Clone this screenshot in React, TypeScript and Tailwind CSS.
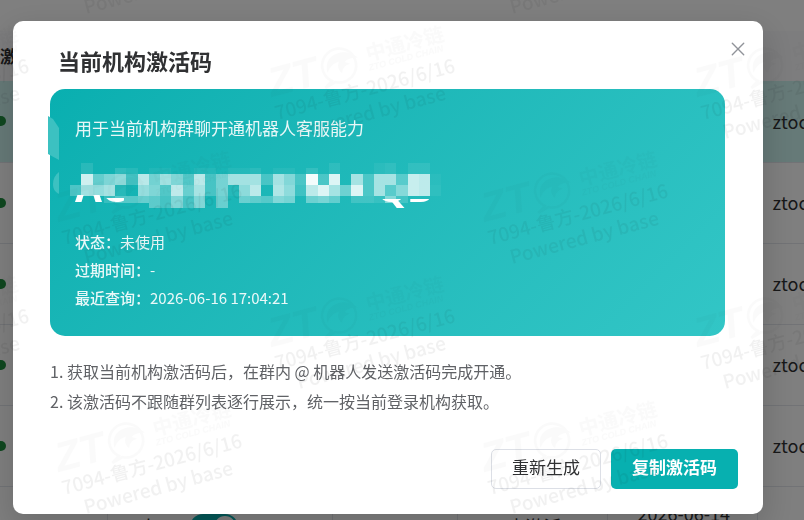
import React, { useState } from 'react';

const CODE_COLS = [70, 81, 93, 104, 115, 126, 138, 149, 160, 171, 183, 194, 205, 216, 228, 239, 250, 261, 273, 284, 295, 306, 318, 329, 340, 351, 363, 374, 385, 396, 408, 419, 430, 441];

// opacity (percent) of every mask block, one list per row
const CODE_ROWS = [
    { y: 163, h: 5, cells: [0, 10, 0, 0, 0, 0, 0, 0, 0, 0, 0, 0, 0, 0, 0, 0, 0, 0, 0, 0, 0, 0, 0, 8, 0, 0, 0, 5, 8, 0, 8, 8] },
    { y: 168, h: 6, cells: [0, 10, 0, 0, 12, 8, 0, 5, 5, 0, 0, 5, 5, 0, 5, 5, 8, 0, 5, 5, 0, 10, 0, 8, 0, 0, 0, 5, 8, 0, 8, 8] },
    { y: 174, h: 11, cells: [0, 80, 35, 45, 52, 20, 70, 40, 60, 45, 25, 70, 20, 40, 60, 60, 60, 20, 60, 45, 20, 95, 20, 85, 0, 60, 20, 60, 60, 25, 75, 70, 4] },
    { y: 185, h: 11, cells: [25, 60, 55, 62, 8, 0, 55, 45, 25, 72, 35, 62, 20, 40, 5, 50, 70, 0, 65, 50, 15, 70, 85, 60, 35, 85, 20, 60, 25, 45, 75, 70, 6] },
    { y: 196, h: 7, cells: [0, 0, 0, 15, 28, 28, 35, 30, 20, 45, 20, 45, 0, 35, 0, 35, 30, 25, 45, 40, 0, 35, 40, 30, 0, 15, 15, 10, 45, 15] },
    { y: 203, h: 5, cells: [0, 0, 0, 0, 0, 0, 0, 30, 20, 45, 20, 45, 0, 35] },
];

const details = [
    { label: '状态', value: '未使用' },
    { label: '过期时间', value: '-' },
    { label: '最近查询', value: '2026-06-16 17:04:21' },
];

const rows = [1, 2, 3, 4, 5, 6];

const MaskedCode = () => (
    <svg viewBox="75 143 370 85" className="block h-[85px] w-[370px] overflow-visible" role="img" aria-label="激活码">
        <defs>
            <clipPath id="code-start">
                <path d="M70 195 H104 V198 H140 V207 H70 Z" />
            </clipPath>
            <clipPath id="code-end">
                <rect x="350" y="199" width="90" height="9" />
            </clipPath>
        </defs>
        <path d="M48 116 L53 119 L59 128 V160 L48 154 Z" fill="#3cc1c1" />
        <path d="M59 172 C55 175 53 179 53 184 C53 189 55 192 59 194 Z" fill="#3cc1c1" />
        {CODE_ROWS.map((row) =>
            row.cells.map((value, i) => (
                <rect
                    key={`${row.y}-${i}`}
                    x={CODE_COLS[i]}
                    y={row.y}
                    width={CODE_COLS[i + 1] - CODE_COLS[i]}
                    height={row.h}
                    fill="#fff"
                    opacity={value / 100}
                    shapeRendering="crispEdges"
                />
            ))
        )}
        <g fill="#fff" fontFamily="'Noto Sans', sans-serif" fontWeight="700" fontSize="39">
            <text x="75" y="202" clipPath="url(#code-start)">AC</text>
            <text x="433" y="202" textAnchor="end" clipPath="url(#code-end)">QB</text>
        </g>
    </svg>
);

const Watermark = () => (
    <svg className="pointer-events-none fixed inset-0 z-20 h-full w-full" aria-hidden="true">
        <defs>
            <g id="mark" fill="#000" fontFamily="'Noto Sans CJK SC', sans-serif">
                <g opacity="0.02" transform="translate(10 77) rotate(-15)">
                    <text x="0" y="0" fontSize="41" fontWeight="900" fontStyle="italic" fontFamily="'Liberation Sans', sans-serif">ZT</text>
                    {/* bird in a ring */}
                    <path d="M62 0 A17 17 0 1 1 86 -2 A17 17 0 0 1 65 2 L54 5 Z" fill="none" stroke="#000" strokeWidth="2.5" />
                    <path d="M60 -9 C60 -19 66 -25 74 -25 C81 -26 87 -23 93 -16 C86 -18 82 -17 79 -15 L84 -12 C78 -12 75 -9 74 -5 C71 -9 71 -13 74 -17 C68 -17 63 -14 60 -9 Z" />
                    <text x="102" y="-10" fontSize="20" fontWeight="700">中通冷链</text>
                    <text x="101" y="0" fontSize="9" fontWeight="700" fontStyle="italic" fontFamily="'Liberation Sans', sans-serif">ZTO COLD CHAIN</text>
                </g>
                <g opacity="0.055" fontSize="19" fontWeight="500">
                    <text transform="translate(15 100) rotate(-15)">7094-鲁方-2026/6/16</text>
                    <text transform="translate(37 119) rotate(-15)">Powered by base</text>
                </g>
            </g>
            <pattern id="marks" x="262" y="20" width="426" height="250" patternUnits="userSpaceOnUse">
                <use href="#mark" />
                <use href="#mark" x="213" y="125" />
            </pattern>
        </defs>
        <rect width="100%" height="100%" fill="url(#marks)" />
    </svg>
);

const GroupTable = () => (
    <table className="w-full min-w-[804px] table-fixed border-collapse text-left text-[18px] text-[#303133]">
        <colgroup>
            <col className="w-[107px]" />
            <col className="w-[225px]" />
            <col className="w-[125px]" />
            <col className="w-[150px]" />
            <col className="w-[150px]" />
            <col />
        </colgroup>
        <thead>
            <tr className="h-[50px] bg-[#fbfbfc]">
                <th className="text-[17px] font-bold" scope="col">激</th>
                <th />
                <th />
                <th />
                <th />
                <th />
            </tr>
        </thead>
        <tbody>
            {rows.map((row) => (
                <tr key={row} className={row === 1 ? 'h-[81px] bg-[#cdf4f1]' : 'h-[81px] border-t border-[#e4e7ed]'}>
                    <td className="border-r border-[#e4e7ed]">
                        <span className="-ml-1 block size-[10px] rounded-full bg-[#1f8f3f]" />
                    </td>
                    <td className="border-r border-[#e4e7ed]">
                        {row === 6 && (
                            <label className="flex items-center gap-8 pl-8">
                                人
                                <input type="checkbox" defaultChecked className="relative h-[26px] w-12 appearance-none rounded-full bg-[#07b0b0] before:absolute before:right-[2px] before:top-[2px] before:size-[22px] before:rounded-full before:bg-white" />
                            </label>
                        )}
                    </td>
                    <td className="border-r border-[#e4e7ed]" />
                    <td className="border-r border-[#e4e7ed] pl-[50px]">{row === 6 && '未激活'}</td>
                    <td className="border-r border-[#e4e7ed] pl-[30px] leading-[27px]">
                        {row === 6 && (
                            <>
                                2026-06-14
                                <br />
                                10:21:36
                            </>
                        )}
                    </td>
                    <td className="pl-[15px]">ztoc</td>
                </tr>
            ))}
        </tbody>
    </table>
);

export default function App() {
    const [open, setOpen] = useState(true);

    return (
        <div className="relative h-screen overflow-hidden bg-white pt-[31px] font-['Noto_Sans_CJK_SC',sans-serif]">
            <GroupTable />

            {open && (
                <div className="fixed inset-0 z-10 overflow-hidden bg-black/50 pt-[21px] pr-[41px] pl-[13px]">
                    <div role="dialog" aria-labelledby="dialog-title" className="rounded-[10px] bg-white px-[25px] pt-6 pb-[25px] shadow-[0_12px_32px_4px_rgba(0,0,0,0.14)]">
                        <div className="mb-[14px] flex items-start justify-between pl-5">
                            <h2 id="dialog-title" className="text-[22px] leading-[30px] font-bold text-[#303133]">当前机构激活码</h2>
                            <button type="button" aria-label="关闭" onClick={() => setOpen(false)} className="-mt-3 -mr-4 p-2 text-[#909399]">
                                <svg viewBox="0 0 14 14" className="size-4" fill="none" stroke="currentColor" strokeWidth="1.2" strokeLinecap="round">
                                    <path d="M2 2 L12 12 M12 2 L2 12" />
                                </svg>
                            </button>
                        </div>

                        <div className="pr-[13px] pl-3">
                            <div className="rounded-[15px] bg-linear-135 from-[#08afb0] to-[#32c6c6] px-[25px] py-6 text-white">
                                <p className="text-[17px] leading-[30px] text-white/90">用于当前机构群聊开通机器人客服能力</p>
                                <MaskedCode />
                                <div className="text-[15px] leading-7 text-white/90">
                                    {details.map((d) => (
                                        <p key={d.label}>
                                            <span className="font-medium">{d.label}：</span>
                                            {d.value}
                                        </p>
                                    ))}
                                </div>
                            </div>

                            <ol className="mt-5 text-[16px] leading-[30px] text-[#606266]">
                                <li>1. 获取当前机构激活码后，在群内 @ 机器人发送激活码完成开通。</li>
                                <li>2. 该激活码不跟随群列表逐行展示，统一按当前登录机构获取。</li>
                            </ol>
                        </div>

                        <div className="mt-[33px] flex justify-end gap-[10px]">
                            <button type="button" className="h-10 w-[110px] rounded-[5px] border border-[#dcdfe6] bg-white pb-1 text-[17px] text-[#303133]">重新生成</button>
                            <button type="button" className="h-10 w-[127px] rounded-[5px] bg-[#07b0b0] pb-1 text-[17px] font-bold text-white">复制激活码</button>
                        </div>
                    </div>
                </div>
            )}

            <Watermark />
        </div>
    );
}
